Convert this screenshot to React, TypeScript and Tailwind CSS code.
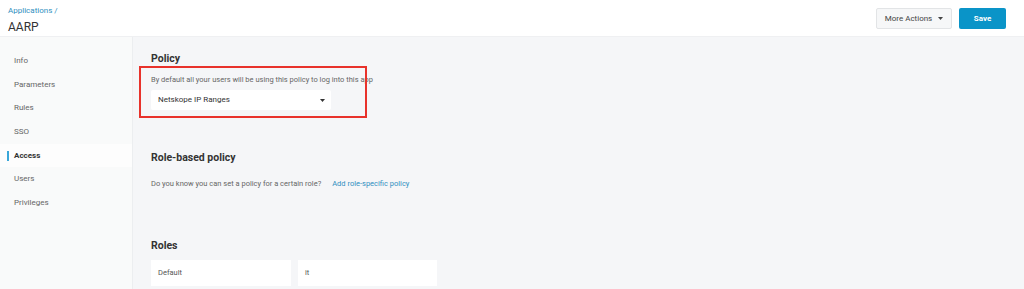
const navItems = ["Info", "Parameters", "Rules", "SSO", "Access", "Users", "Privileges"];

function Caret() {
  return (
    <svg width="5" height="3" viewBox="0 0 5 3" className="fill-current">
      <path d="M0 0h5L2.5 3z" />
    </svg>
  );
}

export default function App() {
  return (
    <div className="w-[1024px] h-[289px] overflow-hidden bg-[#f5f6f8] text-[#333] font-['Roboto',sans-serif]">
      <header className="h-[37px] bg-white flex items-start justify-between pl-2 pr-[18px] border-b border-[#eff0f2]">
        <div className="pt-[6px]">
          <div className="text-[8px] leading-[10px] text-[#2f8fc0]">Applications /</div>
          <h1 className="text-[12px] leading-[16px] mt-[3px] text-[#333]">AARP</h1>
        </div>
        <div className="flex gap-[7px] pt-[8px]">
          <button className="h-[21px] w-[76px] flex items-center justify-center gap-[6px] bg-[#f6f7f8] border border-[#e2e4e6] rounded-[2px] text-[8px] text-[#444]">
            More Actions
            <Caret />
          </button>
          <button className="h-[21px] w-[47px] bg-[#0a94c8] rounded-[2px] text-[8px] font-bold text-white">
            Save
          </button>
        </div>
      </header>

      <div className="flex h-[252px]">
        <aside className="w-[133px] bg-[#f9fafa] border-r border-[#eceef0] pt-[12px]">
          {navItems.map((item) => (
            <div
              key={item}
              className={`h-[23.7px] flex items-center pl-[14px] text-[8px] relative ${
                item === "Access" ? "bg-[#fdfdfd] font-bold text-[#333]" : "text-[#666]"
              }`}
            >
              {item === "Access" && (
                <span className="absolute left-[7px] top-[7px] w-[2px] h-[10px] bg-[#3aa7d9]" />
              )}
              {item}
            </div>
          ))}
        </aside>

        <main className="flex-1 pl-[18px] pt-[15px]">
          <section className="relative">
            <h2 className="text-[10.5px] leading-[13px] font-bold text-[#333]">Policy</h2>
            <p className="mt-[10px] text-[7.5px] leading-[10px] text-[#666]">
              By default all your users will be using this policy to log into this app
            </p>
            <div className="mt-[5px] w-[180px] h-[20px] bg-white rounded-[2px] flex items-center justify-between pl-[7px] pr-[6px] text-[8px] text-[#333]">
              Netskope IP Ranges
              <Caret />
            </div>
            <div className="absolute left-[-12px] top-[14px] w-[228px] h-[52px] border-2 border-[#e8322b] pointer-events-none" />
          </section>

          <section className="mt-[41px]">
            <h2 className="text-[10.5px] leading-[13px] font-bold text-[#333]">Role-based policy</h2>
            <p className="mt-[15px] text-[7.5px] leading-[10px] text-[#666] flex gap-[11px]">
              <span>Do you know you can set a policy for a certain role?</span>
              <span className="text-[#2f8fc0]">Add role-specific policy</span>
            </p>
          </section>

          <section className="mt-[50px]">
            <h2 className="text-[10.5px] leading-[13px] font-bold text-[#333]">Roles</h2>
            <div className="mt-[8px] flex gap-[7px]">
              <div className="w-[140px] h-[26px] bg-white pl-[7px] flex items-center text-[7.5px] text-[#555]">
                Default
              </div>
              <div className="w-[139px] h-[26px] bg-white pl-[7px] flex items-center text-[7.5px] text-[#555]">
                it
              </div>
            </div>
          </section>
        </main>
      </div>
    </div>
  );
}
